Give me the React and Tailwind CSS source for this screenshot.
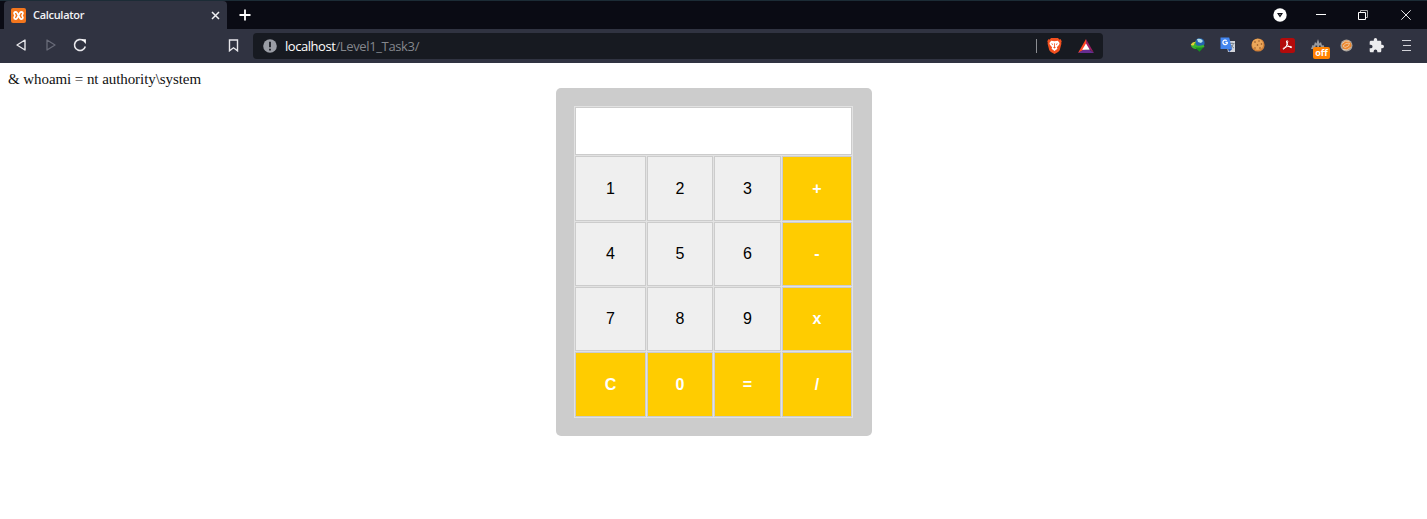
import React from "react";

function Xampp() {
  return (
    <svg className="h-[15px] w-[15px] shrink-0" viewBox="0 0 15 15">
      <rect width="15" height="15" rx="2" fill="#f3761d" />
      <path d="M7.500 7.500L6 4.700Q5.500 3.900 4.500 3.900 3 4 3.100 5.500L4 7.500 3.100 9.500Q3 11 4.500 11.100 5.500 11.100 6 10.300L9 4.700Q9.500 3.900 10.500 3.900 12 4 11.900 5.500L11 7.500 11.900 9.500Q12 11 10.500 11.100 9.500 11.100 9 10.300L7.500 7.500" fill="none" stroke="#fff" strokeWidth="1.700" strokeLinejoin="round" />
    </svg>
  );
}

function TabStrip() {
  return (
    <div className="flex h-[29px] items-center border-t border-[#1c2c36] bg-[#0a0b14] pl-1">
      <div className="flex h-full w-[223px] shrink-0 items-center rounded-t-[4px] bg-[#303341] pl-[7px]">
        <Xampp />
        <span className="ml-[7px] w-[60px] whitespace-nowrap font-['Open_Sans',sans-serif] text-[11px] font-semibold leading-4 tracking-[-0.3px] text-[#f2f3f6]">Calculator</span>
        <svg className="ml-[118px] h-[9px] w-[9px] shrink-0" viewBox="0 0 9 9"><path d="M1 1l7 7M8 1l-7 7" stroke="#f0f0f3" strokeWidth="1.5" /></svg>
      </div>
      <svg className="ml-3 h-3 w-3 shrink-0" viewBox="0 0 12 12"><path d="M6 .5v11M.5 6h11" stroke="#fff" strokeWidth="1.8" /></svg>
      <svg className="ml-[1022px] h-[14px] w-[14px] shrink-0" viewBox="0 0 14 14"><circle cx="7" cy="7" r="6.7" fill="#fff" /><path d="M4 5h6L7 9.6z" fill="#0a0b14" /><path d="M6 6h2L7 7.4z" fill="#888" /></svg>
      <svg className="ml-[29px] h-[10px] w-[10px] shrink-0" viewBox="0 0 10 10"><path d="M0 4.5h10" stroke="#fff" /></svg>
      <svg className="ml-[32px] h-[10px] w-[10px] shrink-0" viewBox="0 0 10 10"><path d="M.5 2.5h7v7h-7z" fill="none" stroke="#fff" /><path d="M2.500 2V.5h7v7H8" fill="none" stroke="#aaa" /></svg>
      <svg className="ml-[33px] h-[10px] w-[10px] shrink-0" viewBox="0 0 10 10"><path d="M.3.3l9.400 9.400M9.700.3L.3 9.700" stroke="#e5e5e8" /></svg>
    </div>
  );
}

function AddressBar() {
  return (
    <div className="ml-[14px] mt-[2px] flex h-[26px] w-[850px] shrink-0 items-center rounded-[4px] bg-[#171a21] pl-[10px]">
      <svg className="h-[14px] w-[14px] shrink-0" viewBox="0 0 14 14"><circle cx="7" cy="7" r="6.800" fill="#9a9da5" /><path d="M7 2.800v5.500M7 9.800v1.800" stroke="#22252c" strokeWidth="1.900" /></svg>
      <div className="ml-2 w-[740px] whitespace-nowrap font-['Open_Sans',sans-serif] text-[13px] leading-5 text-[#84878d]">
        <span className="tracking-[-0.45px] text-white">localhost</span><span className="tracking-[-0.36px]">/Level1_Task3/</span>
      </div>
      <div className="ml-[11px] h-[14px] w-px bg-[#8b8d92]" />
      <svg className="ml-[10px] h-4 w-[15px] shrink-0" viewBox="0 0 15 16">
        <path d="M4 0h7l1.300 1.400 1.500-.1.900 2.300-.5 1.100.2 1-1.700 6.500-1.600 1.700L7.500 16l-3.600-2.100-1.600-1.700L.6 5.700l.2-1-.5-1.100.9-2.300 1.500.1z" fill="#f2501f" />
        <path d="M4.200 2.700l3.300.5 3.300-.5 1.800 2.400-.5 1.600-2.200 2.600.5 1.400L7.500 13l-2.900-2.300.5-1.400-2.200-2.600-.5-1.600z" fill="#fff" />
        <path d="M3.800 5.300l2.400.7-.5 1zM11.200 5.300L8.800 6l.5 1zM7.100 5.300h.8v3.500l1 .6-1.400 1-1.400-1 1-.6z" fill="#f2501f" />
      </svg>
      <svg className="ml-4 h-[14px] w-4 shrink-0" viewBox="0 0 16 14"><path d="M8 0L0 14l8-4z" fill="#ff4724" /><path d="M8 0l8 14-8-7z" fill="#9e1f63" /><path d="M0 14h16l-4-3H5z" fill="#662d91" /><path d="M8 4.500l3.800 6.200H4.200z" fill="#fff" /></svg>
    </div>
  );
}

function Extensions() {
  return (
    <>
      <svg className="ml-[87px] h-[14px] w-[15px] shrink-0" viewBox="0 0 15 14">
        <circle cx="9.800" cy="5" r="4.800" fill="#2464b0" /><path d="M7 1q4-1 6 2l-2 2-3-1z" fill="#b5dfe6" />
        <path d="M.8 6.500Q2.500 3.500 6 3.700 4.500 5.500 6.500 7.200 9.500 8.700 13.500 6.800L14.500 9Q9.500 11.500 5.500 11 1 10.200.8 6.500z" fill="#3cb52e" /><path d="M.8 6.500Q2.500 3.500 6 3.700 4 5 4 7 2 8.300.8 6.500z" fill="#e9cd3a" /><path d="M5 9.500h8.500l-4 4.300z" fill="#168f20" />
      </svg>
      <svg className="ml-[15px] h-4 w-4 shrink-0" viewBox="0 0 16 16">
        <path d="M6 4h9v11H8z" fill="#d2d4d9" /><path d="M.5.5h8.700l3 11.500H.5z" fill="#4386ef" /><path d="M7.600 5.300H5.400M7.500 5.200A2.300 2.300 0 1 1 6.700 3.600" fill="none" stroke="#fff" strokeWidth="1.200" /><path d="M10 6.500h4.500M12 5.500v1M13.500 6.500q-1 3.500-3 4.500M11 8q1 2 3 3" fill="none" stroke="#6a7787" strokeWidth=".8" /><path d="M8 12h4.200L9 15z" fill="#2859b2" />
      </svg>
      <svg className="ml-[15px] h-[14px] w-[14px] shrink-0" viewBox="0 0 14 14"><circle cx="7" cy="7" r="6.600" fill="#d08038" /><circle cx="6.600" cy="6.400" r="5.600" fill="#eba75a" /><g fill="#8a4f20"><circle cx="4" cy="4" r=".8" /><circle cx="8" cy="3" r=".7" /><circle cx="10.500" cy="6" r=".8" /><circle cx="6.500" cy="7" r=".8" /><circle cx="4" cy="10" r=".7" /><circle cx="9" cy="10" r=".8" /></g></svg>
      <svg className="ml-[15px] h-[15px] w-[15px] shrink-0" viewBox="0 0 15 15"><rect width="15" height="15" rx="2.500" fill="#b30b0b" /><path d="M6.500 3q1-1 1.300.5-.2 2-1.500 4.500-1.500 3-3 3.200-.8-.7 1.200-1.800 3-1.300 6.500-1 1.400.5.300 1.300-1.800 0-3.600-2.500Q6.300 4.800 6.500 3z" fill="none" stroke="#fff" strokeWidth="1" /></svg>
      <div className="relative ml-[16px] h-[14px] w-[14px] shrink-0">
        <svg className="h-[14px] w-[14px]" viewBox="0 0 14 14"><path d="M0 11l1.500-4L3 7.500 4 4l1.500 1.500L7 1l1.500 4.500L10 4l1 3.500L12.500 7 14 11z" fill="#9a9a9d" /><path d="M4.500 7.500h1.700v1.500H4.500zM8 7.500h1.700v1.500H8z" fill="#35363d" /></svg>
        <span className="absolute left-[2px] top-[9px] flex h-[12px] w-[17px] items-center justify-center rounded-[2px] bg-[#ff8200] pb-px font-['Open_Sans',sans-serif] text-[9px] font-bold leading-none text-white">off</span>
      </div>
      <svg className="ml-[15px] h-[13px] w-[13px] shrink-0" viewBox="0 0 13 13"><circle cx="6.500" cy="6.500" r="6" fill="#a9a39c" /><circle cx="6.700" cy="6.200" r="4.700" fill="#ed872d" /><path d="M2 4.500Q5 1 9.500 2.300M3 7l3-2.500 3.500-.5L8.500 7 5 8.500zM3 10.500q4 1.500 7.500-2" fill="none" stroke="#efdcc5" strokeWidth=".7" /></svg>
      <svg className="ml-[16px] h-[15px] w-[15px] shrink-0" viewBox="1 1 22 22"><path fill="#ececee" d="M20.500 11H19V7c0-1.100-.9-2-2-2h-4V3.500a2.500 2.500 0 0 0-5 0V5H4c-1.100 0-2 .9-2 2v3.800h1.500a2.700 2.700 0 0 1 0 5.400H2V20c0 1.100.9 2 2 2h3.800v-1.500a2.700 2.700 0 0 1 5.400 0V22H17c1.100 0 2-.9 2-2v-4h1.500a2.500 2.500 0 0 0 0-5z" /></svg>
      <svg className="ml-[18px] h-[13px] w-[9px] shrink-0" viewBox="0 0 9 13"><path d="M0 1.500h9M1 6.500h8M0 11.500h9" stroke="#d2d3d8" strokeWidth="1.200" /></svg>
    </>
  );
}

function Toolbar() {
  return (
    <div className="flex h-[34px] items-center bg-[#303341] pb-[2px] pl-4">
      <svg className="h-3 w-[10px] shrink-0" viewBox="0 0 10 12"><path d="M9 1v10L1 6z" fill="none" stroke="#e7e7eb" strokeWidth="1.400" strokeLinejoin="round" /></svg>
      <svg className="ml-5 h-3 w-[10px] shrink-0" viewBox="0 0 10 12"><path d="M1 1v10l8-5z" fill="none" stroke="#686b78" strokeWidth="1.300" strokeLinejoin="round" /></svg>
      <svg className="ml-[17px] h-[14px] w-[14px] shrink-0" viewBox="0 0 14 14"><path d="M12.300 8.500A5.500 5.500 0 1 1 10.400 2.700" fill="none" stroke="#e7e7eb" strokeWidth="1.600" /><path d="M8.400 1.300h4.500V6z" fill="#fff" /></svg>
      <svg className="ml-[141px] h-[13px] w-[11px] shrink-0" viewBox="0 0 11 13"><path d="M1.500 1h8v10.800l-4-3-4 3z" fill="none" stroke="#e7e7eb" strokeWidth="1.400" /></svg>
      <AddressBar />
      <Extensions />
    </div>
  );
}

const keys = ["1", "2", "3", "+", "4", "5", "6", "-", "7", "8", "9", "x", "C", "0", "=", "/"];

function Calculator() {
  return (
    <div className="ml-[355px] mt-[25px] h-[348px] w-[316px] shrink-0 rounded-[5px] bg-[#ccc] p-[18px]">
      <div className="grid h-[312px] w-[279px] grid-cols-[71px_66px_67px_70px] grid-rows-[48px_65px_64px_64px_65px] gap-px border border-[#e2e2e2] bg-[#e2e2e2]">
        <div className="col-span-4 border border-[#ccc] bg-white" />
        {keys.map((k) => (
          <button
            key={k}
            className={
              /[1-9]/.test(k)
                ? "border border-[#ccc] bg-[#efefef] font-['Liberation_Sans',sans-serif] text-[16px] leading-none text-black"
                : "border border-[#ccc] bg-[#fc0] font-['Liberation_Sans',sans-serif] text-[16px] font-bold leading-none text-white"
            }
          >
            {k}
          </button>
        ))}
      </div>
    </div>
  );
}

export default function App() {
  return (
    <div className="h-[519px] w-[1427px] overflow-hidden bg-white">
      <TabStrip />
      <Toolbar />
      <main className="flex items-start">
        <p className="ml-2 mt-[7px] w-[193px] whitespace-nowrap font-['Liberation_Serif',serif] text-[15px] leading-[18px] tracking-[-0.07px] text-[#111]">&amp; whoami = nt authority\system</p>
        <Calculator />
      </main>
    </div>
  );
}
